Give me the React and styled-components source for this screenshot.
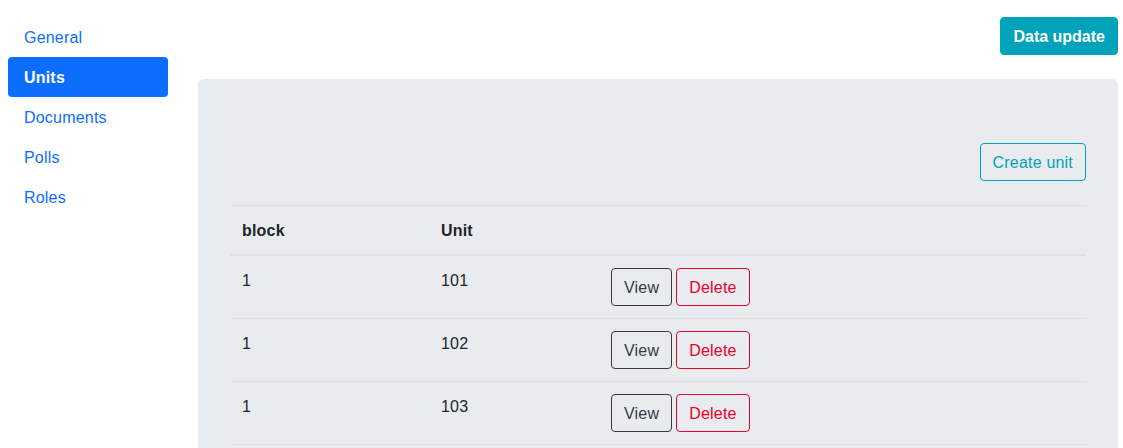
import React from 'react'
import styled, {createGlobalStyle} from 'styled-components'

const GlobalStyle = createGlobalStyle`
  body {
    margin: 0;
    font-family: "Liberation Sans", Arial, sans-serif;
    font-size: 16px;
    line-height: 24px;
    letter-spacing: 0.2px;
    color: #212529;
    background: #fff;
  }
  * { box-sizing: border-box; }
`

const Layout = styled.div`
  display: grid;
  grid-template-columns: 160px 1fr;
  column-gap: 30px;
  padding: 17px 5px 0 8px;
`

const Nav = styled.nav`
  display: flex;
  flex-direction: column;
`

const NavLink = styled.a`
  display: block;
  padding: 9px 16px 7px;
  border-radius: 4px;
  text-decoration: none;
  color: ${({$active}) => ($active ? '#fff' : '#0d6efd')};
  background: ${({$active}) => ($active ? '#0d6efd' : 'transparent')};
  font-weight: ${({$active}) => ($active ? 700 : 400)};
  cursor: pointer;
`

const Main = styled.main`
  display: flex;
  flex-direction: column;
`

const TopBar = styled.div`
  display: flex;
  justify-content: flex-end;
  margin-bottom: 24px;
`

const Button = styled.button`
  font-family: inherit;
  font-size: 16px;
  line-height: 24px;
  letter-spacing: ${({$solid}) => ($solid ? '0' : '0.2px')};
  padding: 7px 12px 5px;
  border-radius: 4px;
  border: 1px solid ${({$color}) => $color};
  background: ${({$solid, $color}) => ($solid ? $color : 'transparent')};
  color: ${({$solid, $color}) => ($solid ? '#fff' : $color)};
  font-weight: ${({$solid}) => ($solid ? 700 : 400)};
  cursor: pointer;
`

const Panel = styled.section`
  background: #e9ecef;
  border-radius: 6px;
  padding: 64px 32px;
`

const PanelActions = styled.div`
  display: flex;
  justify-content: flex-end;
  margin-bottom: 24px;
`

const Table = styled.table`
  width: 100%;
  border-collapse: collapse;
`

const Th = styled.th`
  text-align: left;
  font-weight: 700;
  padding: 13px 12px 11px;
  border-top: 1px solid #dee2e6;
  border-bottom: 2px solid #dee2e6;
  width: ${({$w}) => $w || 'auto'};
`

const Td = styled.td`
  padding: 13px 12px 11px;
  vertical-align: top;
  border-bottom: 1px solid #dee2e6;
`

const ActionCell = styled(Td)`
  padding: 12px;
`

const Actions = styled.div`
  display: flex;
  gap: 4px;
`

const units = [
    {block: 1, unit: 101},
    {block: 1, unit: 102},
    {block: 1, unit: 103},
]

const App = () => {
    const links = ['General', 'Units', 'Documents', 'Polls', 'Roles']

    return (
        <>
            <GlobalStyle />
            <Layout>
                <Nav>
                    {links.map((l) => (
                        <NavLink key={l} $active={l === 'Units'}>{l}</NavLink>
                    ))}
                </Nav>
                <Main>
                    <TopBar>
                        <Button $solid $color="#00a3ba">Data update</Button>
                    </TopBar>
                    <Panel>
                        <PanelActions>
                            <Button $color="#00a3ba">Create unit</Button>
                        </PanelActions>
                        <Table>
                            <thead>
                                <tr>
                                    <Th $w="199px">block</Th>
                                    <Th $w="170px">Unit</Th>
                                    <Th />
                                </tr>
                            </thead>
                            <tbody>
                                {units.map((u) => (
                                    <tr key={u.unit}>
                                        <Td>{u.block}</Td>
                                        <Td>{u.unit}</Td>
                                        <ActionCell>
                                            <Actions>
                                                <Button $color="#343a40">View</Button>
                                                <Button $color="#e8002b">Delete</Button>
                                            </Actions>
                                        </ActionCell>
                                    </tr>
                                ))}
                            </tbody>
                        </Table>
                    </Panel>
                </Main>
            </Layout>
        </>
    )
}

export default App
